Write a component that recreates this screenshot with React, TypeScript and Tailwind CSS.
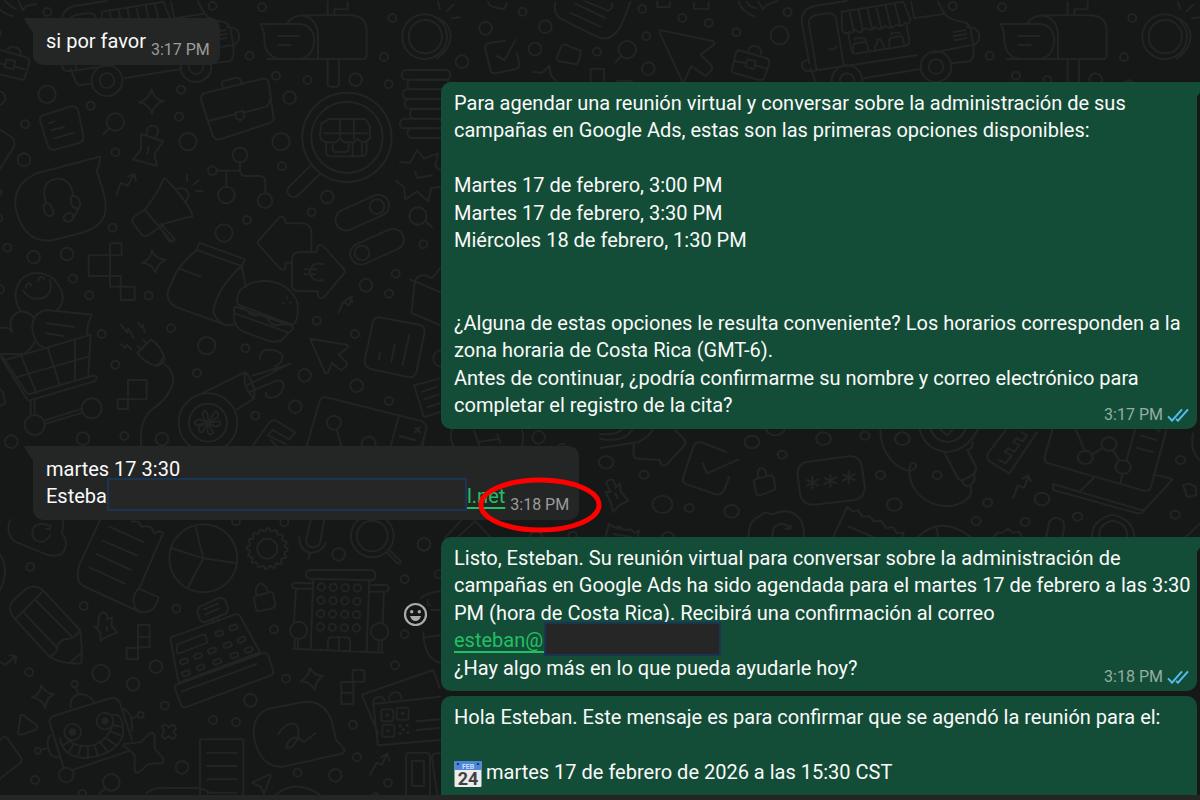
import type { ReactNode } from 'react'

type Dot = [number, number, number]

const topDots: Dot[] = [
  [458, 18, 12], [606, 22, 12], [997, 54, 12], [569, 167, 12], [972, 171, 12],
  [648, 227, 12], [742, 240, 12], [887, 239, 19], [986, 253, 12], [-38, 36, 12],
]

const leftTopDots: Dot[] = [
  [141, 283, 26], [272, 317, 12], [75, 373, 12], [72, 479, 19], [346, 457, 12], [543, 269, 12],
  [537, 350, 12], [564, 425, 26], [869, 293, 19], [843, 425, 26], [846, 499, 12], [982, 591, 19],
  [935, 637, 12], [741, 660, 12], [338, 683, 12], [672, 699, 26], [101, 771, 19], [201, 762, 19],
  [22, 743, 12], [-4, 294, 20], [-8, 655, 14], [-6, 578, 11], [-8, 99, 10],
]

const midDots: Dot[] = [
  [219, 236, 12], [268, 286, 12], [446, 287, 12], [305, 402, 12], [346, 494, 12], [513, 385, 12],
  [620, 437, 26], [591, 519, 12], [736, 445, 12], [914, 526, 19], [1098, 256, 19], [1187, 221, 12],
  [1167, 281, 12], [1270, 133, 12], [950, 362, 12], [1065, 402, 12], [1070, 557, 19], [1167, 603, 12],
  [886, 620, 19], [766, 647, 12], [486, 717, 19], [373, 708, 12], [249, 716, 19], [34, 725, 19],
  [1325, 475, 25], [0, 268, 12],
]

const bottomDots: Dot[] = [
  [91, 141, 12], [251, 258, 12], [529, 266, 12], [708, 4, 12], [853, 7, 12], [1016, 103, 19],
  [1272, 73, 19], [1214, 178, 12], [1316, 163, 12], [822, 328, 12], [1214, 343, 12], [87, 457, 12],
  [303, 460, 26], [468, 440, 19], [399, 493, 19], [858, 476, 12], [1185, 436, 12], [751, 541, 19],
  [494, 557, 12], [639, 600, 12], [708, 607, 12], [1059, 614, 12], [1071, 712, 12], [1164, 789, 12],
  [1006, 766, 19], [893, 758, 12], [546, 742, 19], [105, 780, 12], [334, 787, 25], [247, 822, 12],
  [1127, 832, 12],
]

const headerDots: Dot[] = [
  [368, 35, 12], [257, 85, 19], [436, 80, 19], [405, 147, 19], [186, 185, 19], [591, 155, 12],
  [682, 149, 26], [727, 27, 12], [847, 54, 12], [926, 69, 12], [1009, 97, 12], [739, 109, 12],
  [745, 206, 19], [1139, 106, 27], [1163, 37, 12], [54, 648, 26],
]

const stripDots: Dot[] = [
  [397, 66, 19], [476, 104, 12], [458, 20, 26], [584, 56, 19], [692, 47, 12], [790, 56, 19],
  [115, 164, 12], [16, 127, 19], [163, 253, 26], [233, 264, 12], [344, 274, 19], [733, 165, 12],
  [881, 166, 12], [769, 254, 19], [1013, 248, 12], [1155, 237, 19], [983, 303, 12], [1111, 306, 12],
  [1248, 290, 12], [1503, 284, 12], [1517, 120, 12], [178, 352, 16],
]

// 16 teeth around the rim
const gearPoints = Array.from({ length: 64 }, (_, i) => {
  const r = i % 4 < 2 ? 61 : 53
  const a = (i / 64) * Math.PI * 2
  return `${Math.round(802 + r * Math.cos(a))},${Math.round(86 + r * Math.sin(a))}`
}).join(' ')

const Dots = ({ items }: { items: Dot[] }) => (
  <>
    {items.map(([x, y, r], i) => (
      <circle key={i} cx={x} cy={y} r={r} />
    ))}
  </>
)

const TopRow = () => (
  <g id="top-row">
    {/* van */}
    <path d="M28 190 5 65Q4 28 42 18L140 3M32 206 45 240Q49 256 65 255L96 250M26 180Q2 182 6 198 10 218 34 212M190 235 364 207M50 211 27 75Q24 52 45 46L82 40Q104 38 108 55L131 195M34 213 350 166M88 147Q108 150 109 138" />
    <path d="M125 35 310 5 332 60M125 35 126 90Q132 104 146 97 160 100 164 88 178 104 190 90 196 82 200 86 214 96 225 80 240 94 256 78 270 90 290 74 302 84 316 68 332 74 332 55M148 30 160 88M175 27 188 88M201 22 216 84M228 19 243 80M256 14 272 78M284 10 300 74M145 102 154 150Q156 164 172 160L315 138Q328 135 328 122L320 76" />
    <path d="M160 158V140Q160 132 168 130L194 126Q204 127 205 150M165 120Q162 116 170 115H192Q200 118 196 126M225 150Q222 138 232 130V118H240L246 128Q256 138 252 146M268 140V122Q268 114 276 113L300 108Q310 108 312 134M274 104Q272 98 280 98H300" />
    <path d="M333 5 343 55 430 42M414 5 434 42Q450 62 492 66 508 70 512 90L520 135Q524 180 508 184L456 190M400 158 510 136M500 82Q534 80 538 106 538 132 516 137M461 96 496 90M461 108 500 102M463 121 500 114" />
    <circle cx="141" cy="242" r="46" /><circle cx="141" cy="242" r="22" />
    <circle cx="408" cy="200" r="46" /><circle cx="408" cy="200" r="22" />
    {/* mailbox */}
    <path d="M602 72H720Q760 76 763 120 760 170 720 177H660Q615 170 613 120 614 95 602 72ZM683 68Q700 46 730 46H875Q918 50 920 90V165Q920 177 908 177H622M725 46Q768 52 774 100V177M655 108H718M655 135H692M803 5V45M823 44V28H863V5M803 178V252Q803 260 812 260H828Q837 260 837 252V178" />
    {/* lens */}
    <circle cx="1094" cy="110" r="67" /><circle cx="1096" cy="110" r="50" />
    <path d="M1122 50Q1170 65 1172 110 1170 150 1130 176M1134 5 1140 27M1161 33 1180 14M1175 55 1200 52" />
    <Dots items={topDots} />
  </g>
)

const LeftTop = () => (
  <g>
    <path d="M0 28Q12 42 40 48M15 3Q30 20 48 27M55 3 68 30 78 18 108 12" />
    <path d="M-4 148 78 172Q90 176 88 188L75 232Q72 242 60 238L-4 222M-4 190 16 194M44 200 74 208M20 178 46 184 40 208 14 202ZM24 148Q30 136 46 142 64 146 62 166" />
    <path d="m132 345 82-26q14-3 20 10l16 80q2 14-12 20l-74 20q-14 2-20-10l-24-78q-2-12 12-16ZM147 370l16-6M154 391l38-10M161 416l62-18" />
    <circle cx="346" cy="366" r="26" /><path d="m328 385-18 18M-4 386 38 414Q46 424 42 440L0 506" />
    <path d="M455 269q8 30 36 34-28 8-35 38-8-28-38-34 28-8 37-38Z" />
    <path d="m612 280 176-44q14-2 18 12l14 100q4 18-14 22l-144 48q-16 4-24-12l-34-104q-4-16 8-22ZM668 262l-2-8q-2-10 8-12l36-9q10-1 12 10l2 6M625 363l80-20M732 338l66-18q12-6 10-20M706 338l22-6 6 18-12 12-14-8Z" />
    <path d="m424 402 65 22-26 38 8 36-72-20 24-30ZM440 404v-14q8-16 24-12 12 6 10 20l-8 16M446 440l-4 22" />
    <path d="m349 585 14-36 20 8 20-34M384 530l19-8 5 20" />
    <path d="M300 470Q298 500 290 512L310 575Q328 640 300 668 280 690 240 700L160 720Q70 735 46 620 40 550 110 520L285 474Q296 468 300 470ZM138 608Q120 550 162 538 212 528 221 590M138 610q12-2 18 14 10 18-4 24-14 2-20-16-4-20 6-22ZM215 588q16-2 22 10 8 18-2 27-14 2-20-12-6-18 0-25ZM238 622 220 654M205 640q14-4 15 10-4 16-18 15-12-2-11-14 4-8 14-11Z" />
    <path d="M492 535q-22 50-58 94l-32 22q-8 6-4 16l28 38q10 8 20 0l48-34q46-14 84-22-10-38-80-112-4-4-6-2ZM434 629l78 92q10 8 10-6l-40-44M476 676l30 46q14 8 18-4M532 566q28-6 34 16 0 18-12 22M561 524v20M580 554l16-14M588 573h20" />
    <circle cx="720" cy="465" r="22" /><circle cx="637" cy="512" r="13" /><circle cx="679" cy="585" r="25" /><circle cx="795" cy="602" r="22" />
    <path d="M650 512h70M720 488v26q2 16 18 14h40q18 0 18 18v34M679 514v46" />
    <circle cx="1041" cy="412" r="134" /><circle cx="1041" cy="412" r="107" />
    <path d="M932 497 866 562q-8 12 0 22 12 12 26 4l68-66M988 357h108l14 22v34q-10 16-26 12l-10-8-12 10h-30l-12-12-12 12h-24q-22 0-24-22l4-34ZM972 400h137M1020 357v60M1062 357v60M978 425v30q0 14 16 14h90q16 0 16-14v-34M998 430v14q0 12 10 12h26q12 0 12-12v-14M1058 430v39M1086 430v39" />
    <rect x="1002" y="606" width="170" height="64" rx="32" transform="rotate(-24 1087 638)" /><circle cx="1131" cy="620" r="22" />
    <rect x="1046" y="708" width="170" height="64" rx="32" transform="rotate(-24 1131 740)" /><circle cx="1086" cy="759" r="22" />
    <Dots items={leftTopDots} />
  </g>
)

const LeftMiddle = () => (
  <g>
    <path d="M330 130h35v36h-35ZM266 166h64v62h-64ZM330 228h32v32h-32ZM362 260h42v40h-42Z" />
    <path d="M456 150q8 26 42 30-26 10-32 38-10-28-40-30 26-8 30-38Z" />
    {/* box and burger */}
    <path d="M598 128 735 178 725 198 590 150ZM590 150Q545 190 530 215L505 270Q495 300 525 320L670 372Q690 380 706 370M725 198 738 262M725 198Q655 260 640 330 640 350 665 370M537 206 602 230" />
    <path d="M712 296Q716 250 790 242 870 245 893 310 896 370 876 374L715 314Q708 304 712 296ZM706 320 876 378Q884 390 866 398L704 340Q698 326 706 320ZM702 344Q698 376 730 395L810 424Q845 432 864 398M718 322Q732 322 746 338 760 350 776 346 790 344 802 356 816 376 830 376L858 372" />
    <g fill="#222424" stroke="none"><circle cx="861" cy="293" r="4" /><circle cx="851" cy="309" r="4" /><circle cx="871" cy="307" r="4" /></g>
    {/* arrows */}
    <path d="M836 54q10-8 18 2l4 14h50q26 2 26 30v54M836 54 774 124q-2 6 2 10l64 72q12 8 16-2v-16h18M954 138q10-8 20 4l60 68q2 6-2 10l-58 70q-12 10-20-2v-14h-58q-20-2-20-20v-78q2-18 22-20h52ZM970 192q-36-8-40 24 4 32 40 24M914 208h36M914 223h32" />
    <circle cx="1254" cy="48" r="26" /><path d="m1274 64 22 18M1016 338l14-32 18 10 8-26M1034 304l18-14 6 16" />
    {/* chat heads */}
    <path d="M60 330Q30 280 66 236 110 202 160 236 210 290 172 330M150 240Q160 280 130 294 90 304 70 272M78 264q-2-10 6-14 8 0 10 8M115 244q0-12 10-14 8 2 8 10M36 396Q20 350 60 334 88 334 104 356M0 384Q26 378 38 396M0 462H70Q94 450 104 424M140 330 276 344Q260 370 262 405M140 330Q90 340 98 395 110 440 130 440M140 370 222 380M138 400 190 408" />
    {/* cart */}
    <path d="M0 468 80 596Q84 604 94 600L280 545Q292 542 290 532 286 524 274 528L96 580Q84 586 78 576L8 470M10 482 272 404 265 526M64 468 110 580M144 446 178 552M225 420V540M55 530 265 470M92 604V646M104 602V646M132 662 246 626M134 672 248 638" />
    <circle cx="104" cy="675" r="30" /><circle cx="275" cy="625" r="30" />
    {/* plug */}
    <path d="m362 374 20 24 2-12 18 28M414 368l10 14 4-8 6 22M362 432l14 12 4-10 14 14M430 420l8 8M412 438l10 8M454 418Q484 440 494 476 492 492 470 498 440 492 412 460ZM468 496q14-4 20-22M494 494Q530 520 515 560 500 600 460 625 415 660 424 740" />
    <path d="M384 540h56v58h-56ZM353 598h31v29h-31Z" />
    {/* blower */}
    <circle cx="624" cy="668" r="88" /><circle cx="624" cy="668" r="57" />
    <path d="M606 580 736 516Q770 556 762 596L710 628M736 516q-8 30 10 60l16 22M760 526l112-34M744 554l58-28 56-30M748 576l82-34q24-4 20 22-14 36-46 28-8-4-6-14M780 476q-2-16 14-26 46-4 54 20 0 18-24 30" />
    <path d="M624 668q-24-16-12-36 14 0 12 36l22-34q14 4 6 20l-28 14 36-4q4 14-14 16l-22-12 16 30q-10 12-18-2l2-28-18 30q-14-4-8-18l26-12-36 8q-8-12 8-18Z" />
    {/* cursor, chart, laptop */}
    <path d="m930 416 110 18q8 4 2 10l-26 20 24 24q4 6-2 12l-10 8q-6 4-12-2l-20-18-12 30q-6 6-10-2ZM1138 352l118 22q20 4 18 22l-24 118q-6 20-24 18l-116-26q-18-6-16-24l24-112q6-20 20-18ZM1140 460l-3 18M1184 434l-10 52M1228 404l-20 90M920 740 960 600Q965 590 978 592L1266 664Q1282 672 1278 688L1268 738M1196 652 1172 738M1248 684l10 10M1260 682l-14 14M1200 708l46 12M1010 688l14 50" />
    <circle cx="1002" cy="668" r="21" /><circle cx="1106" cy="731" r="21" />
    <path d="m758 738 50-70q12-12 24-4l54 34-18 20-50-28-14 16 52 26M812 720l18 18M1320 205l-24 30-20-10q-30 0-32 26l-10 88 86 36M1230 238l90 38M1242 556l78-20M1242 556l30 96 48-16M1266 576l44-16M1274 598l42-14M1282 622l38-12M0 568l8 6 8 36-16 8" />
    <Dots items={midDots} />
  </g>
)

const LeftBottom = () => (
  <g>
    <path d="M30 0Q15 40 45 65L140 104Q195 118 198 70 195 48 184 38 194 20 188 0M148 18Q130 4 104 18 88 42 106 60 132 76 150 46M138 26l12 2 2-14M0 104Q30 150 0 212" />
    {/* scroll */}
    <path d="M300 0 240 130Q222 180 250 198L420 276Q464 284 476 232L416 206M402 250Q394 230 420 200L490 38 476 34 462 40 456 24 440 18 424 20 416 6 396 4M402 250Q404 270 424 276M328 20 430 66M308 62 412 107M289 102 393 150M270 143 374 191" />
    <circle cx="610" cy="115" r="102" /><path d="M610 115 586 18M610 115 514 84M610 115 563 204M610 115 708 129" />
    <circle cx="802" cy="86" r="30" />
    <polygon points={gearPoints} />
    <path d="M932 0 918 60Q920 82 940 82 960 80 962 60L972 0M898 52Q898 90 930 98 964 100 978 68M930 98l-4 18" />
    <circle cx="1117" cy="48" r="64" /><circle cx="1117" cy="48" r="46" /><path d="m1160 96 30 32q12 8 12-4l-36-36" />
    {/* pencil */}
    <path d="M46 298Q12 260 50 232L82 204Q108 192 130 212L240 330Q248 380 244 430 190 434 148 410ZM46 298 130 212M68 274 172 384M106 240 214 348M148 410Q176 396 172 380 178 356 206 356 226 356 240 330M214 424 244 400" />
    {/* star pin, pixels, lock */}
    <path d="m284 320 10 2 2-22q0-18 14-24 14 8 12 22l14-6-2 24 18 22-28 10-22 14-2-26ZM320 320l2 12M414 315h35v67h-35ZM414 350h35M380 384h34v34h-34ZM1058 450h35v35h-35ZM1024 486h36v66h-36ZM1024 518h36" />
    <path d="M762 238q-2-8 6-10l42-12q8-2 10 6l6 32q0 8-8 10l-40 10q-8 0-10-8ZM770 228q-8-30 12-38 20 6 20 28" />
    {/* hotel */}
    <path d="M930 150h184q14 4 12 18-2 14-14 13L930 176q-14-4-12-14 2-12 12-12ZM940 178 932 388M1108 180 1100 394M880 386 1150 398M936 190 884 188q-10 4-8 10 4 8 12 8h48M1108 196l50-2q10 4 8 12-2 10-10 9h-48M888 208l-6 98M1152 216l-4 94M884 356v32M894 356v32M1136 362v34M1146 362v34M984 388v-26q0-10 12-10h42q12 0 12 12v28M1017 352v38" />
    <circle cx="896" cy="331" r="26" /><circle cx="1139" cy="335" r="26" />
    {[0, 1, 2, 3].map((r) => [0, 1, 2, 3].map((c) => (
      <circle key={`${r}${c}`} cx={964 + c * 36 - r * 1} cy={201 + r * 40 + c} r="11" />
    )))}
    {/* cash register */}
    <path d="M518 350 704 284Q714 280 720 288L780 396 536 488 512 362Q510 354 518 350ZM526 496 792 398Q800 398 804 404L820 452Q822 462 812 466L556 562Q548 564 544 556L524 504ZM546 514 770 432M600 260l56-26q16-2 20 8l8 22q0 14-10 18l-56 24q-14 2-18-8l-8-22q0-10 8-16ZM612 268l42-18M616 284l40-18M638 296l4 14M652 290l4 14M532 374l76-30q8-2 10 6l4 18-84 32q-8 0-8-8Z" />
    {[[658, 340], [700, 323], [725, 359], [683, 375], [636, 392], [594, 408], [552, 424], [746, 390], [703, 406], [652, 425], [602, 442], [558, 460]].map(([x, y]) => (
      <rect key={x} x={x - 12} y={y - 7} width="24" height="14" rx="6" transform={`rotate(-20 ${x} ${y})`} />
    ))}
    <path d="M124 496q10 24 38 26-24 12-26 42-10-28-40-32 24-8 28-36ZM930 444q10 22 40 24-22 12-26 42-14-26-42-26 24-14 28-40Z" />
    <path d="m0 426 16 8 30-24M30 406l18 3-2 20M62 586q8-4 14 4l34 26q4 8-4 14l-42 14q-10 2-10-8ZM0 660q12-12 18-10l46 64q2 8-2 14L0 776" />
    {/* robot */}
    <path d="M150 612Q144 598 160 588L330 535Q352 530 360 550L396 660M150 612 192 746M218 750 390 692M212 562Q206 530 240 522 270 524 284 548M236 522 228 504M370 566Q400 578 396 634M398 594 412 588M122 690 142 684M152 646Q134 660 150 700 162 714 176 712M180 654Q188 710 250 714 340 710 368 650 374 600 352 584L338 584M198 652Q220 680 262 678 310 676 336 622M190 676l20-14M206 696l14-22M234 710l8-30M264 714v-34M294 708l-10-30M322 694l-18-24M346 674l-26-18M362 646l-30-12M368 620l-30-4" />
    <circle cx="218" cy="636" r="25" /><circle cx="315" cy="603" r="25" /><circle cx="218" cy="636" r="8" fill="#222424" /><circle cx="315" cy="603" r="8" fill="#222424" />
    <circle cx="224" cy="492" r="10" /><circle cx="422" cy="585" r="9" /><circle cx="113" cy="692" r="9" /><circle cx="199" cy="765" r="22" />
    <path d="m372 672 52-6 24-26q12-4 16 6v40l26 30q4 10-6 14l-40 2-28 26q-10 2-12-8v-46l-32-26ZM486 618q8-8 16 0l6 4 8-8q10 2 12 12l-8 10 8 10q-2 10-12 10l-10-8-10 8q-10-2-10-12l6-10ZM600 825V658h130v167M622 698h88M622 738h88M622 778h88M622 818h88M440 820q20-20 60-16h90q30 4 40 16M756 788l52-24q4 0 4 6l-20 52-10-22ZM316 805l-20 18M826 825q60-50 136 0" />
    <path d="M800 568 910 546Q975 540 996 606L1008 660Q1020 670 1034 690 1034 700 1020 702L850 740Q780 745 762 650 756 590 800 568ZM834 644Q860 600 890 614 906 650 876 680 854 690 860 674 872 652 892 652L912 666 946 640M1110 764l20-36 16 6 16-32M1144 712l18-12 6 22" />
    {/* QR cards */}
    <path d="M1134 640 1086 524 1300 450 1320 505M1134 676 1120 552 1320 530M1134 676 1320 660M1250 604 1320 598M1250 630 1320 624M1120 548q-2-14 14-16 14-6 20 10M1168 540q-2-18 12-22 18-4 22 8l4 16" />
    <rect x="1144" y="568" width="36" height="36" rx="6" /><rect x="1190" y="563" width="36" height="36" rx="6" /><rect x="1147" y="614" width="36" height="36" rx="6" />
    <g fill="#222424" stroke="none"><circle cx="1162" cy="585" r="6" /><circle cx="1208" cy="580" r="6" /><circle cx="1164" cy="632" r="6" /><circle cx="1200" cy="618" r="5" /><circle cx="1222" cy="616" r="5" /><circle cx="1211" cy="628" r="5" /><circle cx="1201" cy="640" r="5" /><circle cx="1224" cy="638" r="5" /></g>
    <path d="M1218 825V710q0-12 12-12h46q14 0 14 12v115M1236 722h36v76h-36ZM1320 700q-26-2-24 14l16 110M1262 234q20-16 58-20M1284 240q-4 16 8 16M1294 270h26M1270 338q4 80 50 90M1276 352l44-6" />
    <Dots items={bottomDots} />
  </g>
)

const Header = () => (
  <g>
    <path d="M262 130 316 122M262 130Q254 136 256 148L272 212Q276 222 288 220L350 206Q360 200 358 190L350 158M290 168 314 180 346 120M264 5q2 14 18 16l24 6q14-2 14-18" />
    <path d="M466 5Q458 40 482 56L590 110Q630 130 662 80L692 5M510 38 602 80M524 10 616 54M556 4 624 32Q640 26 636 8M482 144q4-12 16-10l10 6 30 10q6 4 4 10l-8 30q-4 4-10 2l-46-8q-8-4-8-10ZM664 168l-18 20" />
    <path d="m400 216 26 2 22-20 4 26 16 20M572 242V206h40v36M652 242h44M772 5v16h38V5M882 8v18h44V8" />
    <path d="m780 90 160 34q6 4 2 10l-40 30 34 34q2 6-2 12l-14 16q-6 4-10-2l-36-26-22 46M780 90q-4 4 0 10l66 142" />
    <path d="m1016 150 82 24q12 4 10 16l-14 42q-4 10-16 8l-74-20q-10-4-8-14l12-46q2-8 8-10ZM1002 182l36 8M1064 196l38 10M1042 178l26 6-6 24-26-8ZM1044 152q4-14 22-14 20 4 18 24M1016 5q10 30 48 44M1040 5q10 16 28 20M1075 5l14 22 14-14 30-10" />
    {[[5, 210, 146], [22, 239, 126], [8, 268, 140], [14, 297, 126], [30, 327, 110], [0, 356, 126], [22, 385, 110]].map(([x, y, w]) => (
      <rect key={y} x={x} y={y} width={w} height="29" rx="14" />
    ))}
    <path d="m52 450 20 26 42-16-8 40 20 14M126 560l-32 4-10 40-32-30-36 24-4-36-24-18M0 486l30 2 22-38M44 514l8 20 44-8M76 662l20 20" />
    <Dots items={headerDots} />
  </g>
)

const Strip = () => (
  <g>
    <path d="M88 68V106q2 10 12 10l56 4 4 14q8 6 16-2l46-58q4-8-2-16L196 30M0 84 100 66Q130 50 136 30M0 56Q60 70 84 30M0 42Q40 46 56 30M330 96 268 68Q252 62 244 80L218 170Q212 186 228 194L300 222Q318 228 326 206L338 170M268 130 280 160 362 118" />
    <path d="M402 186q0-8 8-10l36-10q6 0 8 8l4 30q0 6-8 8l-32 14q-8 0-10-8ZM414 176q-6-28 8-32 14 6 12 26M14 216l14 0-12-26q4-14 18-10 8 14 6 24l12-14 2 24 20 28-24 14-16 20-6-30ZM40 220l6 14" />
    <path d="M540 126 656 108Q680 110 684 140L692 200Q692 232 666 240L560 254Q526 256 522 216L516 160Q518 130 540 126ZM555 170v36M540 180l30 16M570 178l-30 20M602 164v36M587 174l30 16M617 172l-30 20M650 154v36M635 164l30 16M665 162l-30 20" />
    <path d="M733 30Q732 90 770 130 810 168 826 140 824 124 812 132 802 160 818 200 850 262 920 258 980 240 968 198M836 30Q850 90 908 96 960 90 986 30M864 30Q880 66 908 66 940 64 954 30M890 30 908 46 920 30M900 98 934 172Q940 186 952 178L976 162Q984 156 982 140L960 90M946 182Q952 204 968 196 982 184 978 162M960 90Q974 86 974 66" />
    <path d="M1060 30 1014 100Q1008 114 1018 124L1070 160 1142 36M1042 120 1060 130 1076 106 1058 96 1066 84 1082 96 1096 76 1080 66 1088 54 1104 64 1116 46 1100 36M1080 234 1092 196 1108 204 1120 170M1104 176 1118 166 1126 184" />
    <path d="M1182 30 1162 110Q1160 126 1172 130L1420 212Q1436 214 1440 200L1480 30M1244 30 1266 92M1284 104 1314 84M1340 90 1358 124M1398 30 1376 120M1366 160 1360 188M1412 46 1454 60M1404 84 1444 96M1290 174 1256 212M1184 192 1408 268Q1420 272 1426 266L1496 178 1450 164M1184 192V210L1404 280Q1416 284 1424 268M1456 30 1462 34M1550 40Q1540 90 1566 120M1524 196 1538 190 1556 200 1558 226 1534 230ZM1530 352 1568 310" />
    <circle cx="1268" cy="112" r="20" /><circle cx="1330" cy="72" r="20" /><circle cx="1367" cy="141" r="20" />
    <path d="M388 350Q388 300 416 290 430 270 448 284 500 258 524 300 536 330 532 350M452 350Q446 320 470 312 490 310 496 326M484 326H498V316M610 350 646 260 660 274 674 270 686 290 704 288 716 304 734 302 748 324 766 322 776 340 794 338 790 350M650 320 712 350M832 350Q890 284 968 350M878 318 884 350M1030 350 1038 338 1052 338 1066 326 1080 338 1096 336 1102 350M1166 350 1174 306Q1188 284 1210 302 1216 320 1208 350M1286 350Q1284 300 1340 284 1394 300 1396 350M1304 350Q1304 308 1340 302 1378 310 1378 350M14 350 24 312 36 322 50 320 64 330 80 328 90 338 102 332 98 350M36 342 80 350" />
    <Dots items={stripDots} />
  </g>
)

const Wallpaper = () => (
  <svg className="pointer-events-none absolute left-0 top-0" width="1200" height="800" viewBox="0 0 1200 800" fill="none" stroke="#222424" strokeWidth="6" strokeLinejoin="round" strokeLinecap="round" aria-hidden="true">
    <g transform="translate(800 0) scale(.3333)"><TopRow /></g>
    <use href="#top-row" transform="translate(60 0) scale(.3333)" />
    <g transform="scale(.3333)"><LeftTop /></g>
    <g transform="translate(0 200) scale(.3333)"><LeftMiddle /></g>
    <g transform="translate(0 520) scale(.3333)"><LeftBottom /></g>
    <g transform="translate(400 0) scale(.3333)"><Header /></g>
    <g transform="translate(600 420) scale(.3827 .3333)"><Strip /></g>
    <g transform="translate(400 425) scale(.3333)">
      <path d="M46 8l14 14M60 8l-14 14M0 34l46 12M80 12 64 62M156 12q-8 26 4 50M222 16l16 46M238 50l58-8M292 28l8 24M366 16q8 24 0 46M134 340l48-52M170 340l56-52 48 52M618 330l8-32 34 16" />
      <Dots items={[[416, 37, 19], [72, 358, 19], [486, 66, 10], [518, 332, 12], [408, 338, 19]]} />
    </g>
  </svg>
)

const Ticks = () => (
  <svg width="22" height="14" viewBox="0 0 66 42" fill="none" stroke="#53bdeb" strokeWidth="6" role="img" aria-label="Leído">
    <path d="M3 25 15 38 45 4M27 33 33 38 63 4" />
  </svg>
)

const Calendar = () => (
  <svg className="mr-1 inline-block h-7 w-7 -my-1 align-middle" viewBox="0 0 28 28" role="img" aria-label="Calendario">
    <rect x="0.5" y="1" width="27" height="26" rx="1" fill="#ececec" />
    <path d="M0.5 1h27v9h-27z" fill="#4d87dc" />
    <circle cx="4" cy="4" r="1.3" fill="#20406f" />
    <circle cx="24" cy="4" r="1.3" fill="#20406f" />
    <text x="14" y="9" textAnchor="middle" fontSize="7" fontWeight="700" fill="#c9dcf7">FEB</text>
    <text x="14" y="25" textAnchor="middle" fontSize="18" fontWeight="700" fill="#3f4145">24</text>
  </svg>
)

const Tail = ({ side }: { side: 'left' | 'right' }) =>
  side === 'left' ? (
    <svg className="absolute -left-[9px] top-0" width="18" height="17" viewBox="0 0 18 17" fill="#242626" aria-hidden="true">
      <path d="M1 0h17v17H9v-2L0.5 2Q0 0 1 0Z" />
    </svg>
  ) : (
    <svg className="absolute -right-[9px] top-0" width="18" height="17" viewBox="0 0 18 17" fill="#144d37" aria-hidden="true">
      <path d="M17 0H0v17h9v-2l8.500-13Q18 0 17 0Z" />
    </svg>
  )

function Incoming({ time, marked, children }: { time: string; marked?: boolean; children: ReactNode }) {
  return (
    <li className="relative ml-[33px] mt-[17px] flex w-fit items-end gap-[5px] rounded-[10px] bg-[#242626] pb-[9px] pl-[13px] pr-[10px] pt-[10px]">
      <Tail side="left" />
      <div className="relative">{children}</div>
      <div className="relative -mb-1 text-base leading-5 text-[#9b9c9c]">
        <time>{time}</time>
        {marked && (
          <svg className="absolute left-1/2 top-1/2 -translate-x-1/2 -translate-y-1/2 max-w-none" width="126" height="58" viewBox="0 0 126 58" fill="none" aria-hidden="true">
            <ellipse cx="63" cy="29" rx="59" ry="25" stroke="#fe0000" strokeWidth="5" />
          </svg>
        )}
      </div>
    </li>
  )
}

interface OutgoingProps {
  time?: string
  grouped?: boolean
  children: ReactNode
}

function Outgoing({ time, grouped, children }: OutgoingProps) {
  return (
    <li className={`relative mr-[3px] w-[63%] self-end rounded-[10px] bg-[#144d37] pb-[9px] pl-[13px] pr-1 pt-2 ${grouped ? 'mt-[5px]' : 'mt-[17px]'}`}>
      {!grouped && <Tail side="right" />}
      <div className="relative whitespace-pre-line">{children}</div>
      {time && (
        <div className="absolute bottom-1 right-2 flex items-center gap-1 text-base leading-5 text-[#94aea4]">
          <time>{time}</time>
          <Ticks />
        </div>
      )}
    </li>
  )
}

export default function App() {
  return (
    <div className="flex h-screen flex-col bg-[#161717] font-[Roboto,sans-serif] text-xl leading-snug text-[#fafafa]">
      <main className="relative flex-1 overflow-hidden">
        <Wallpaper />
        <ol className="relative flex flex-col pt-px">
          <Incoming time="3:17 PM">
            <p>si por favor</p>
          </Incoming>

          <Outgoing time="3:17 PM">
            <p>
              {`Para agendar una reunión virtual y conversar sobre la administración de sus campañas en Google Ads, estas son las primeras opciones disponibles:

Martes 17 de febrero, 3:00 PM
Martes 17 de febrero, 3:30 PM
Miércoles 18 de febrero, 1:30 PM


¿Alguna de estas opciones le resulta conveniente? Los horarios corresponden a la zona horaria de Costa Rica (GMT-6).`}
            </p>
            <p>Antes de continuar, ¿podría confirmarme su nombre y correo electrónico para</p>
            <p>completar el registro de la cita?</p>
          </Outgoing>

          <Incoming time="3:18 PM" marked>
            <p>martes 17 3:30</p>
            <p className="whitespace-nowrap">
              Esteba
              <span className="-mb-px -mt-[7px] inline-block h-[33px] w-[360px] border-2 border-[#1a3454] bg-[#262626] align-middle" />
              <a href="#correo" className="text-[#21c063] underline underline-offset-4">l.net</a>
            </p>
          </Incoming>

          <Outgoing time="3:18 PM">
            <p>Listo, Esteban. Su reunión virtual para conversar sobre la administración de campañas en Google Ads ha sido agendada para el martes 17 de febrero a las 3:30 PM (hora de Costa Rica). Recibirá una confirmación al correo</p>
            <p className="whitespace-nowrap">
              <a href="#esteban" className="text-[#21c063] underline underline-offset-4">esteban@r</a>
              <span className="relative -mb-px -ml-1.5 -mt-[7px] inline-block h-[34px] w-[177px] border-2 border-[#1a3454] bg-[#262626] align-middle" />
            </p>
            <p>¿Hay algo más en lo que pueda ayudarle hoy?</p>
          </Outgoing>

          <Outgoing grouped>
            <p>Hola Esteban. Este mensaje es para confirmar que se agendó la reunión para el:</p>
            <br />
            <p><Calendar />martes 17 de febrero de 2026 a las 15:30 CST</p>
            <br />
          </Outgoing>
        </ol>

        <button type="button" aria-label="Reaccionar" className="absolute left-[403px] top-[602px] rounded-full bg-[#161717]/80">
          <svg width="25" height="25" viewBox="0 0 25 25" fill="none">
            <circle cx="12.500" cy="12.500" r="10.500" stroke="#aaabab" strokeWidth="2.200" />
            <circle cx="8.700" cy="9.700" r="1.700" fill="#aaabab" />
            <circle cx="16.300" cy="9.700" r="1.700" fill="#aaabab" />
            <path d="M7 14h11q-1.500 5-5.500 5T7 14Z" fill="#aaabab" />
          </svg>
        </button>
      </main>
      <footer className="h-[5px] bg-[#242626]" />
    </div>
  )
}
